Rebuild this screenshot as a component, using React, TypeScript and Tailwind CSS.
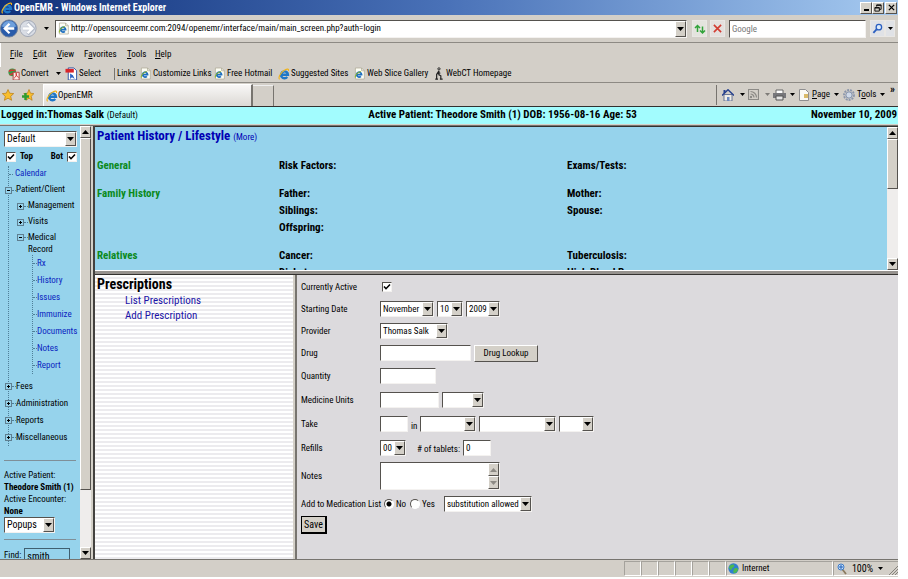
import React from 'react';

const raised = 'border border-t-white border-l-white border-r-[#55524e] border-b-[#55524e] bg-[#d4d0c8]';
const sunken = 'border border-t-[#55524e] border-l-[#55524e] border-r-[#f4f2f0] border-b-[#f4f2f0] bg-white';

const IeLogo = ({ className = 'w-3 h-3' }: { className?: string }) => (
  <svg viewBox="0 0 16 16" className={`shrink-0 ${className}`} fill="none">
    <path d="M4.400 9h8.900a4.600 4.600 0 1 0-1 3" stroke="#1f78c8" strokeWidth="3.200" />
    <path d="M4.800 6A4 4 0 0 1 8.400 3.800" stroke="#7cc4f4" strokeWidth="1.200" />
    <path d="M2.300 15C-1 13.500 4.500 4.500 9.500 2.300c3-1.400 5.300-1.200 4.500 1.700" stroke="#f0b41c" strokeWidth="1.500" />
  </svg>
);

const IePage = () => (
  <svg viewBox="0 0 16 18" className="w-[11px] h-[13px] shrink-0" fill="none">
    <path d="M2 1h9l4 4v12H2z" fill="#fdfdf4" stroke="#a9a58f" />
    <path d="M11 1v4h4" stroke="#a9a58f" />
    <path d="M3.500 10.500h7.500a3.600 3.600 0 1 0-1 2.600" stroke="#1f6fc0" strokeWidth="2.600" />
    <path d="M2 15c-1-3 3-8 8-9" stroke="#8fb72c" strokeWidth="1.500" />
  </svg>
);

const Arrow = ({ up = false, className = 'text-black' }: { up?: boolean; className?: string }) => (
  <svg viewBox="0 0 7 4" className={`w-[7px] h-1 shrink-0 ${className}`} fill="currentColor">
    <path d={up ? 'M0 4h7L3.500 0z' : 'M0 0h7L3.500 4z'} />
  </svg>
);

const TinyArrow = () => (
  <svg viewBox="0 0 5 3" className="w-[5px] h-[3px] shrink-0">
    <path d="M0 0h5L2.500 3z" />
  </svg>
);

interface SelectProps {
  label: string;
  options: string[];
  className?: string;
}

const Select = ({ label, options, className = '' }: SelectProps) => (
  <div className={`relative h-4 shrink-0 ${sunken} ${className}`}>
    <select
      aria-label={label}
      className="block w-full h-full appearance-none bg-transparent pl-[2px] pr-[11px] leading-[14px] outline-none"
    >
      {options.map(option => (
        <option key={option}>{option}</option>
      ))}
    </select>
    <span className={`pointer-events-none absolute inset-y-0 right-0 w-[11px] flex items-center justify-center ${raised}`}>
      <Arrow />
    </span>
  </div>
);

const ScrollBar = ({ thumb, className = '' }: { thumb: string; className?: string }) => (
  <div className={`flex flex-col shrink-0 w-[11px] bg-[#efedec] ${className}`}>
    <button aria-label="Scroll up" className={`h-3 shrink-0 flex items-center justify-center ${raised}`}>
      <Arrow up />
    </button>
    <div className="flex-1 min-h-0">
      <div className={`${thumb} ${raised}`} />
    </div>
    <button aria-label="Scroll down" className={`h-3 shrink-0 flex items-center justify-center ${raised}`}>
      <Arrow />
    </button>
  </div>
);

const TitleBar = () => (
  <header className="flex items-center h-[15px] shrink-0 pl-px pr-px gap-px bg-linear-to-r from-[#10307a] via-[#4a72b8] to-[#a6caf0]">
    <IeLogo className="w-3 h-3" />
    <h1 className="flex-1 text-[10px] leading-[14px] font-bold text-white">OpenEMR - Windows Internet Explorer</h1>
    <div className="flex">
      <button aria-label="Minimize" className={`w-3 h-3 flex items-end justify-center pb-[2px] ${raised}`}>
        <span className="w-[5px] h-[2px] bg-black" />
      </button>
      <button aria-label="Restore" className={`w-3 h-3 flex items-center justify-center ${raised}`}>
        <svg viewBox="0 0 9 9" className="w-2 h-2" fill="none" stroke="#000">
          <path d="M3 3V1h5v5H6M3 1.500h5M1 4h5v4H1zM1 4.500h5" />
        </svg>
      </button>
      <button aria-label="Close" className={`ml-px w-3 h-3 flex items-center justify-center ${raised}`}>
        <svg viewBox="0 0 8 8" className="w-[7px] h-[7px]" stroke="#000" strokeWidth="1.500">
          <path d="M1 1l6 6M7 1L1 7" />
        </svg>
      </button>
    </div>
  </header>
);

const AddressBar = () => (
  <div className="flex items-center h-7 shrink-0 pr-[3px] border-b border-[#8d8a84]">
    <button aria-label="Back" className="shrink-0">
      <svg viewBox="0 0 20 20" className="w-[19px] h-[21px]">
        <circle cx="9.500" cy="10" r="9" fill="#2a5caa" stroke="#6d7f9c" />
        <path d="M2 8a7.700 7.700 0 0 1 15 0c-5 2-10 2-15 0" fill="#6fa0dc" />
        <path d="M10 5l-5 5 5 5M5.500 10H15" stroke="#fff" strokeWidth="2.400" fill="none" />
      </svg>
    </button>
    <button aria-label="Forward" className="shrink-0">
      <svg viewBox="0 0 20 20" className="w-[19px] h-[21px]">
        <circle cx="9.500" cy="10" r="8.500" fill="#d9dde5" stroke="#a0a7b4" />
        <path d="M9 4l6 6-6 6M14 10H4" stroke="#b4bbc8" strokeWidth="3.600" fill="none" />
        <path d="M9 5l5 5-5 5M13.500 10H4" stroke="#fff" strokeWidth="2.400" fill="none" />
      </svg>
    </button>
    <button aria-label="Recent pages" className="w-[17px] flex justify-center shrink-0">
      <TinyArrow />
    </button>
    <div className={`flex items-center flex-1 min-w-0 h-[18px] pl-[2px] ${sunken}`}>
      <IePage />
      <input
        aria-label="Address"
        className="flex-1 min-w-0 pl-[2px] outline-none"
        defaultValue="http://opensourceemr.com:2094/openemr/interface/main/main_screen.php?auth=login"
      />
      <button aria-label="Address history" className={`w-[11px] h-full flex items-center justify-center ${raised}`}>
        <Arrow />
      </button>
    </div>
    <button aria-label="Refresh" className="ml-[5px] w-[15px] h-[17px] flex items-center justify-center border border-[#e9e7e4] bg-[#e4e4de]">
      <svg viewBox="0 0 12 12" className="w-3 h-3" fill="none" stroke="#31a33a" strokeWidth="1.500">
        <path d="M3.500 9V2.500M1 5l2.500-2.500L6 5M8.500 3.500V10M6 7.500L8.500 10 11 7.500" />
      </svg>
    </button>
    <button aria-label="Stop" className="ml-[3px] w-[15px] h-[17px] flex items-center justify-center border border-[#e9e7e4] bg-[#e4e0de]">
      <svg viewBox="0 0 10 10" className="w-[9px] h-[9px]" stroke="#d23c32" strokeWidth="1.800">
        <path d="M1 1l8 8M9 1L1 9" />
      </svg>
    </button>
    <input
      aria-label="Search"
      placeholder="Google"
      className={`ml-1 w-[137px] h-[18px] pl-[2px] placeholder:text-[#777777] outline-none ${sunken}`}
    />
    <button aria-label="Search web" className="ml-1 w-[15px] h-[17px] flex items-center justify-center border border-[#e9e7e4] bg-[#e0e2e6]">
      <svg viewBox="0 0 12 12" className="w-[11px] h-[11px]" fill="none" stroke="#2b5fc0">
        <circle cx="7.500" cy="4.500" r="3" fill="#dcebfb" strokeWidth="1.400" />
        <path d="M5.200 6.800L1.500 10.800" strokeWidth="2" />
      </svg>
    </button>
    <button aria-label="Search options" className="w-[10px] h-[17px] flex items-center justify-center border border-[#e9e7e4] bg-[#e0e2e6]">
      <TinyArrow />
    </button>
  </div>
);

const menus = [
  ['', 'F', 'ile', 'w-[23px]'],
  ['', 'E', 'dit', 'w-6'],
  ['', 'V', 'iew', 'w-[27px]'],
  ['F', 'a', 'vorites', 'w-[43px]'],
  ['', 'T', 'ools', 'w-7'],
  ['', 'H', 'elp', 'w-6'],
];

const MenuBar = () => (
  <nav className="flex items-center h-6 shrink-0 pl-[9px] border-l border-white">
    {menus.map(([before, key, after, width]) => (
      <button key={key} className={`text-left ${width}`}>
        {before}
        <u>{key}</u>
        {after}
      </button>
    ))}
  </nav>
);

const LinksBar = () => (
  <div className="flex items-center h-4 shrink-0 pl-2 pb-[2px] border-b border-[#8d8a84] whitespace-nowrap">
    <button className="flex items-center gap-px w-12">
      <svg viewBox="0 0 14 14" className="w-3 h-3" fill="none">
        <circle cx="5" cy="5" r="4.500" fill="#3b9a4a" />
        <path d="M1 4c3-3 5 0 8-2M2 8l5-2" stroke="#d33" strokeWidth="1.600" />
        <path d="M6 5h7v9H6z" fill="#f8e9e6" stroke="#a33" />
        <path d="M7 12c3-2 3-5 2.500-6 0 3 1 4 3 5" stroke="#d02222" />
      </svg>
      Convert
    </button>
    <TinyArrow />
    <button className="flex items-center gap-px ml-1 w-[49px]">
      <svg viewBox="0 0 13 14" className="w-[13px] h-[13px]" fill="none">
        <path d="M3 1h6l3 3v10H3z" fill="#fff" stroke="#2c4fa0" />
        <path d="M0 2h9v4H0z" fill="#d8252a" />
        <path d="M5 7v6l2-2 3 2-2-4z" fill="#2b62c4" />
      </svg>
      Select
    </button>
    <span className="h-3 border-l border-[#77746f] mr-[2px]" />
    <span className="w-[23px]">Links</span>
    <a href="#customize" className="flex items-center gap-[2px] w-[74px]"><IePage />Customize Links</a>
    <a href="#hotmail" className="flex items-center gap-[2px] w-16"><IePage />Free Hotmail</a>
    <a href="#sites" className="flex items-center gap-px w-[76px]"><IeLogo />Suggested Sites</a>
    <a href="#slices" className="flex items-center gap-[2px] w-20"><IePage />Web Slice Gallery</a>
    <a href="#webct" className="flex items-center gap-[3px]">
      <svg viewBox="0 0 9 14" className="w-[9px] h-[13px]" fill="none" stroke="#222">
        <circle cx="5" cy="2" r="1.200" />
        <path d="M5 4L2.500 8v4.500M5 4.500v4l2 1v3.500M2.500 7.500l4-1M1 13h3M6 13h3" strokeWidth="1.300" />
      </svg>
      WebCT Homepage
    </a>
  </div>
);

const TabBar = () => (
  <div className="flex items-end h-6 shrink-0 border-b border-[#33312f]">
    <div className="flex items-center gap-2 h-full w-[43px] pl-[2px]">
      <button aria-label="Favorites">
        <svg viewBox="0 0 12 12" className="w-3 h-3">
          <path d="M6 .5l1.700 3.700 4 .4-3 2.700.9 4L6 9.200l-3.600 2.100.9-4-3-2.700 4-.4z" fill="#f9be2c" stroke="#b97b12" strokeWidth=".7" />
        </svg>
      </button>
      <button aria-label="Add to favorites">
        <svg viewBox="0 0 12 12" className="w-3 h-3">
          <path d="M7 .5l1.500 3.700 3.400.4-2.600 2.700.8 4L7 9.200l-3.100 2.100.8-4-3-2.700 3.800-.4z" fill="#f9be2c" stroke="#b97b12" strokeWidth=".7" />
          <path d="M3.500 4v7M0 7.500h7" stroke="#2e9c32" strokeWidth="2.400" />
        </svg>
      </button>
    </div>
    <button className="flex items-center h-[22px] w-[210px] pl-[2px] border-t border-l border-white border-r-2 border-r-[#77746f] bg-linear-to-b from-[#f8f7f6] to-[#dcd9d5]">
      <IeLogo />
      OpenEMR
    </button>
    <button aria-label="New tab" className="h-[21px] w-[21px] border-t border-t-[#eeeeee] border-r border-r-[#77746f]" />
    <div className="flex items-center flex-1 h-full justify-end">
      <div className="flex items-center h-5 pl-[5px] border-l border-[#77746f]">
        <button aria-label="Home" className="flex items-center gap-[6px] w-[26px]">
          <svg viewBox="0 0 12 12" className="w-3 h-3">
            <path d="M2 5.500h8V12H2z" fill="#f0eee8" stroke="#4d5c84" strokeWidth=".8" />
            <path d="M0 6.500L6 .8l6 5.700" stroke="#26418e" strokeWidth="1.500" fill="none" />
            <path d="M1.500 1h2v3h-2z" fill="#26418e" />
            <path d="M5 8h2.500v4H5z" fill="#6a88c0" />
          </svg>
          <TinyArrow />
        </button>
        <button aria-label="Feeds" className="flex items-center gap-[6px] w-[25px]">
          <svg viewBox="0 0 11 11" className="w-[11px] h-[11px]" fill="none" stroke="#8c8a86" strokeWidth="1.200">
            <path d="M.5.5h10v10H.5zM2.500 2.500a6 6 0 0 1 6 6M2.500 5a3.500 3.500 0 0 1 3.500 3.500" />
            <circle cx="3" cy="8" r=".6" />
          </svg>
          <span className="opacity-40"><TinyArrow /></span>
        </button>
        <button aria-label="Print" className="flex items-center gap-1 w-[26px]">
          <svg viewBox="0 0 13 12" className="w-[13px] h-3">
            <path d="M3 1h7v4H3z" fill="#fff" stroke="#666" />
            <path d="M0 4h13v5H0z" fill="#77777b" />
            <path d="M3 7h7v4H3z" fill="#e6e6e6" stroke="#555" />
          </svg>
          <TinyArrow />
        </button>
        <button className="flex items-center gap-[3px] w-11">
          <svg viewBox="0 0 10 12" className="w-[10px] h-3 shrink-0" fill="none">
            <path d="M.5.500h6l3 3v8h-9z" fill="#fbfbf6" stroke="#8f8f90" />
            <path d="M5 6h4M5 8h4" stroke="#cfa63c" strokeWidth="1.400" />
          </svg>
          <span><u>P</u>age</span>
          <span className="pl-px"><TinyArrow /></span>
        </button>
        <button className="flex items-center gap-[2px] w-11">
          <svg viewBox="0 0 12 12" className="w-3 h-3 shrink-0" fill="none">
            <circle cx="6" cy="6" r="5" stroke="#8b96ab" strokeWidth="1.800" strokeDasharray="2 1" />
            <circle cx="6" cy="6" r="3.200" fill="#cfd9e8" stroke="#7f8da6" />
          </svg>
          <span>T<u>o</u>ols</span>
          <span className="pl-[2px]"><TinyArrow /></span>
        </button>
        <button aria-label="More commands" className="self-start w-[11px] text-[11px] leading-[10px] font-bold">»</button>
      </div>
    </div>
  </div>
);

const PatientBar = () => (
  <div className="grid grid-cols-[41%_1fr_auto] items-center h-[18px] shrink-0 px-px pb-px text-[11px] leading-4 font-bold bg-[#a2fcfe] border-b border-[#d4d0c8]">
    <span>
      Logged in:Thomas Salk <span className="text-[9px] font-normal">(Default)</span>
    </span>
    <span>Active Patient: Theodore Smith (1) DOB: 1956-08-16 Age: 53</span>
    <span>November 10, 2009</span>
  </div>
);

const Toggle = ({ open = false }: { open?: boolean }) => (
  <span className="relative w-[7px] h-[7px] shrink-0 border border-[#5f7f90] bg-[#96d3ec]">
    <span className="absolute left-px top-[2px] w-[3px] h-px bg-black" />
    {!open && <span className="absolute left-[2px] top-px w-px h-[3px] bg-black" />}
  </span>
);

const Dots = () => <span className="w-1 shrink-0 border-t border-dotted border-[#4f7f98]" />;

const recordLinks = ['Rx', 'History', 'Issues', 'Immunize', 'Documents', 'Notes', 'Report'];
const closedNodes = ['Fees', 'Administration', 'Reports', 'Miscellaneous'];

const NavTree = () => (
  <ul className="ml-2 border-l border-dotted border-[#4f7f98]">
    <li className="flex items-center h-4 gap-[2px]">
      <Dots />
      <a href="#calendar" className="text-[#0a1fc0]">Calendar</a>
    </li>
    <li>
      <div className="flex items-center h-4 -ml-1">
        <Toggle open />
        <Dots />
        Patient/Client
      </div>
      <ul className="pl-2">
        {['Management', 'Visits'].map(item => (
          <li key={item} className="flex items-center h-4">
            <Toggle />
            <Dots />
            {item}
          </li>
        ))}
        <li className="pt-px">
          <div className="flex leading-3">
            <span className="flex items-center h-3">
              <Toggle open />
              <Dots />
            </span>
            <span>Medical<br />Record</span>
          </div>
          <ul className="ml-[15px] mb-1 border-l border-dotted border-[#4f7f98]">
            {recordLinks.map(item => (
              <li key={item} className="flex items-center h-[17px]">
                <Dots />
                <a href={`#${item.toLowerCase()}`} className="text-[#0a1fc0]">{item}</a>
              </li>
            ))}
          </ul>
        </li>
      </ul>
    </li>
    {closedNodes.map(item => (
      <li key={item} className="flex items-center h-[17px] -ml-1">
        <Toggle />
        <Dots />
        {item}
      </li>
    ))}
  </ul>
);

const CheckBox = ({ label }: { label: string }) => (
  <span className={`relative w-[10px] h-[10px] shrink-0 ${sunken}`}>
    <input type="checkbox" aria-label={label} defaultChecked className="peer absolute inset-0 w-full h-full appearance-none" />
    <svg viewBox="0 0 8 8" className="hidden peer-checked:block pointer-events-none w-2 h-2" fill="none" stroke="#000" strokeWidth="1.600">
      <path d="M1 3.500l2 2.200L7 1.500" />
    </svg>
  </span>
);

const Sidebar = () => (
  <aside className="flex shrink-0 w-[95px] bg-[#96d3ec] border-r-2 border-[#44423f]">
    <div className="flex-1 min-w-0 overflow-hidden whitespace-nowrap">
      <div className="pt-[5px] pl-1 pr-[3px]">
        <Select label="Layout" options={['Default']} className="text-[10px]" />
        <div className="flex items-center justify-between h-[19px] pl-[2px] font-bold">
          <span className="flex items-center gap-1"><CheckBox label="Top" />Top</span>
          <span className="flex items-center gap-1">Bot<CheckBox label="Bot" /></span>
        </div>
      </div>
      <NavTree />
      <div className="mt-[14px] mx-1 pt-2 border-t border-[#7f8f98] leading-3">
        <p>Active Patient:</p>
        <p className="font-bold">Theodore Smith (1)</p>
        <p>Active Encounter:</p>
        <p className="font-bold">None</p>
        <Select label="Popups" options={['Popups']} className="w-[51px] text-[10px]" />
      </div>
      <div className="mt-[6px] mx-1 pt-2 border-t border-[#7f8f98]">
        <label className="flex items-center gap-[3px]">
          Find:
          <input defaultValue="smith" className="w-[46px] h-4 pl-[2px] text-[10px] border border-[#3f5f70] outline-none" />
        </label>
      </div>
    </div>
    <ScrollBar thumb="h-[86%]" />
    <div className="w-[2px] bg-[#d4d0c8]" />
  </aside>
);

const historyRows = [
  { section: 'General', items: [['Risk Factors:', 'Exams/Tests:']] },
  { section: 'Family History', items: [['Father:', 'Mother:'], ['Siblings:', 'Spouse:'], ['Offspring:', '']] },
  { section: 'Relatives', items: [['Cancer:', 'Tuberculosis:'], ['Diabetes:', 'High Blood Pressure:']] },
];

const HistoryPane = () => (
  <section className="flex h-1/3 shrink-0 bg-[#96d3ec] border-t border-[#33312f]">
    <div className="flex-1 min-w-0 overflow-hidden pl-[2px]">
      <h2 className="text-[13px] leading-[18px] font-bold text-[#0000b4]">
        Patient History / Lifestyle <a href="#more" className="text-[9px] font-normal">(More)</a>
      </h2>
      <table className="w-full table-fixed text-left text-[11px] leading-[17px] font-bold">
        <colgroup>
          <col className="w-[182px]" />
          <col className="w-72" />
          <col />
        </colgroup>
        {historyRows.map(({ section, items }) => (
          <tbody key={section}>
            <tr className="h-[11px]" />
            {items.map(([left, right], index) => (
              <tr key={left}>
                <th className="text-[#0b8a1c]">{index === 0 ? section : ''}</th>
                <td>{left}</td>
                <td>{right}</td>
              </tr>
            ))}
          </tbody>
        ))}
      </table>
    </div>
    <ScrollBar thumb="h-[42%]" />
  </section>
);

const PrescriptionsPane = () => (
  <section className="w-[198px] shrink-0 pl-[2px] bg-[repeating-linear-gradient(to_bottom,#ffffff_0px,#ffffff_2px,#ecebee_2px,#ecebee_4px)]">
    <h2 className="text-[14px] leading-[18px] font-bold">Prescriptions</h2>
    <ul className="pl-7 text-[11px] leading-[15px] text-[#1c14a8]">
      <li><a href="#list">List Prescriptions</a></li>
      <li><a href="#add">Add Prescription</a></li>
    </ul>
  </section>
);

interface RowProps {
  label: string;
  height?: string;
  children: React.ReactNode;
}

const Row = ({ label, height = 'h-6', children }: RowProps) => (
  <div className={`flex items-center whitespace-nowrap ${height}`}>
    <span className="w-[79px] shrink-0">{label}</span>
    <div className="flex items-center gap-[3px]">{children}</div>
  </div>
);

const Radio = ({ label, checked = false }: { label: string; checked?: boolean }) => (
  <label className="flex items-center gap-[2px]">
    <input
      type="radio"
      name="medication"
      defaultChecked={checked}
      className="appearance-none w-[10px] h-[10px] rounded-full border border-t-[#55524e] border-l-[#55524e] border-r-white border-b-white bg-white checked:bg-[radial-gradient(circle,#000000_2px,#ffffff_3px)]"
    />
    {label}
  </label>
);

const PrescriptionForm = () => (
  <form className="flex-1 min-w-0 pl-1 pt-px overflow-hidden bg-[#dcdadd]" onSubmit={event => event.preventDefault()}>
    <Row label="Currently Active" height="h-[22px]">
      <span className="flex pl-[2px]"><CheckBox label="Currently Active" /></span>
    </Row>
    <Row label="Starting Date" height="h-[22px]">
      <Select label="Month" options={['November']} className="w-[54px]" />
      <Select label="Day" options={['10']} className="w-[26px]" />
      <Select label="Year" options={['2009']} className="w-[34px]" />
    </Row>
    <Row label="Provider" height="h-[22px]">
      <Select label="Provider" options={['Thomas Salk']} className="w-[68px]" />
    </Row>
    <Row label="Drug" height="h-[22px]">
      <input aria-label="Drug" className={`w-[91px] h-4 px-[2px] outline-none ${sunken}`} />
      <button className={`w-16 h-[17px] ${raised}`}>Drug Lookup</button>
    </Row>
    <Row label="Quantity">
      <input aria-label="Quantity" className={`w-14 h-4 px-[2px] outline-none ${sunken}`} />
    </Row>
    <Row label="Medicine Units">
      <input aria-label="Medicine Units" className={`w-[59px] h-4 px-[2px] outline-none ${sunken}`} />
      <Select label="Unit" options={['']} className="w-[42px]" />
    </Row>
    <Row label="Take">
      <input aria-label="Take" className={`w-7 h-4 px-[2px] outline-none ${sunken}`} />
      <span className="pt-1">in</span>
      <Select label="Form" options={['']} className="w-[56px]" />
      <Select label="Route" options={['']} className="w-[77px]" />
      <Select label="Interval" options={['']} className="w-[35px]" />
    </Row>
    <Row label="Refills">
      <Select label="Refills" options={['00']} className="w-[26px]" />
      <label className="flex items-center gap-[3px] pl-2">
        <span className="pt-[2px]"># of tablets:</span>
        <input defaultValue="0" className={`w-7 h-4 px-[2px] outline-none ${sunken}`} />
      </label>
    </Row>
    <Row label="Notes" height="h-8">
      <div className={`flex w-[120px] h-7 ${sunken}`}>
        <textarea aria-label="Notes" className="flex-1 min-w-0 resize-none outline-none" />
        <div className="flex flex-col w-[11px]">
          <span className={`flex-1 flex items-center justify-center ${raised}`}><Arrow up className="text-[#8d8a84]" /></span>
          <span className={`flex-1 flex items-center justify-center ${raised}`}><Arrow className="text-[#8d8a84]" /></span>
        </div>
      </div>
    </Row>
    <Row label="Add to Medication List">
      <span className="flex gap-1 pl-1 pr-[6px]">
        <Radio label="No" checked />
        <Radio label="Yes" />
      </span>
      <Select label="Substitution" options={['substitution allowed']} className="w-[88px]" />
    </Row>
    <button className="w-[26px] h-[18px] text-[10px] leading-[14px] border-2 border-t border-l border-black bg-[#d4d0c8]">Save</button>
  </form>
);

const StatusBar = () => (
  <footer className="flex items-center justify-end h-[19px] shrink-0 py-px border-t border-[#77746f] border-b border-b-white">
    {[0, 1, 2, 3, 4, 5].map(cell => (
      <span key={cell} className="w-[17px] h-full border border-t-[#a5a29c] border-l-[#a5a29c] border-r-white border-b-white" />
    ))}
    <span className="flex items-center gap-[3px] w-[107px] h-full pl-px border border-t-[#a5a29c] border-l-[#a5a29c] border-r-white border-b-white">
      <svg viewBox="0 0 12 12" className="w-[11px] h-[11px]">
        <circle cx="6" cy="6" r="5.600" fill="#2f7fd0" />
        <path d="M2 3c2-2 5-2 5 0S4 5 4 7 1 6 1 5zM7 6c2-1 4 0 4 1s-2 4-4 4-1-4 0-5z" fill="#4db850" />
      </svg>
      Internet
    </span>
    <button className="flex items-center w-[65px] h-full pl-[3px] border border-t-[#a5a29c] border-l-[#a5a29c] border-r-0 border-b-white">
      <svg viewBox="0 0 10 12" className="w-[10px] h-3" fill="none">
        <path d="M5.500 6.500L9 11" stroke="#8a7a60" strokeWidth="1.800" />
        <circle cx="4" cy="4" r="3" fill="#cfe4fa" stroke="#3b7ac8" />
        <path d="M4 2v4M2 4h4" stroke="#1f5fb8" />
      </svg>
      <span className="w-[31px] text-[10px]">100%</span>
      <TinyArrow />
      <svg viewBox="0 0 10 10" className="ml-auto self-end w-[10px] h-[10px]" stroke="#85827c">
        <path d="M1 10l9-9M4 10l6-6M7 10l3-3" />
      </svg>
    </button>
  </footer>
);

const App = () => (
  <div className="h-screen pr-[10px] pb-px bg-white font-['Roboto_Condensed','Arial_Narrow','Liberation_Sans',sans-serif] text-[9px] text-black">
    <div className="flex flex-col h-full overflow-hidden bg-[#d3cfc8]">
      <TitleBar />
      <AddressBar />
      <MenuBar />
      <LinksBar />
      <TabBar />
      <PatientBar />
      <main className="flex flex-1 min-h-0 border-t border-[#77746f]">
        <Sidebar />
        <div className="flex flex-col flex-1 min-w-0">
          <HistoryPane />
          <div className="h-[5px] shrink-0 bg-[#96928e] border-t border-t-white border-b border-b-[#33312f]" />
          <div className="flex flex-1 min-h-0">
            <PrescriptionsPane />
            <div className="w-1 shrink-0 bg-[#d4d0c8] border-r-2 border-[#77746f]" />
            <PrescriptionForm />
          </div>
        </div>
      </main>
      <StatusBar />
    </div>
  </div>
);

export default App;
